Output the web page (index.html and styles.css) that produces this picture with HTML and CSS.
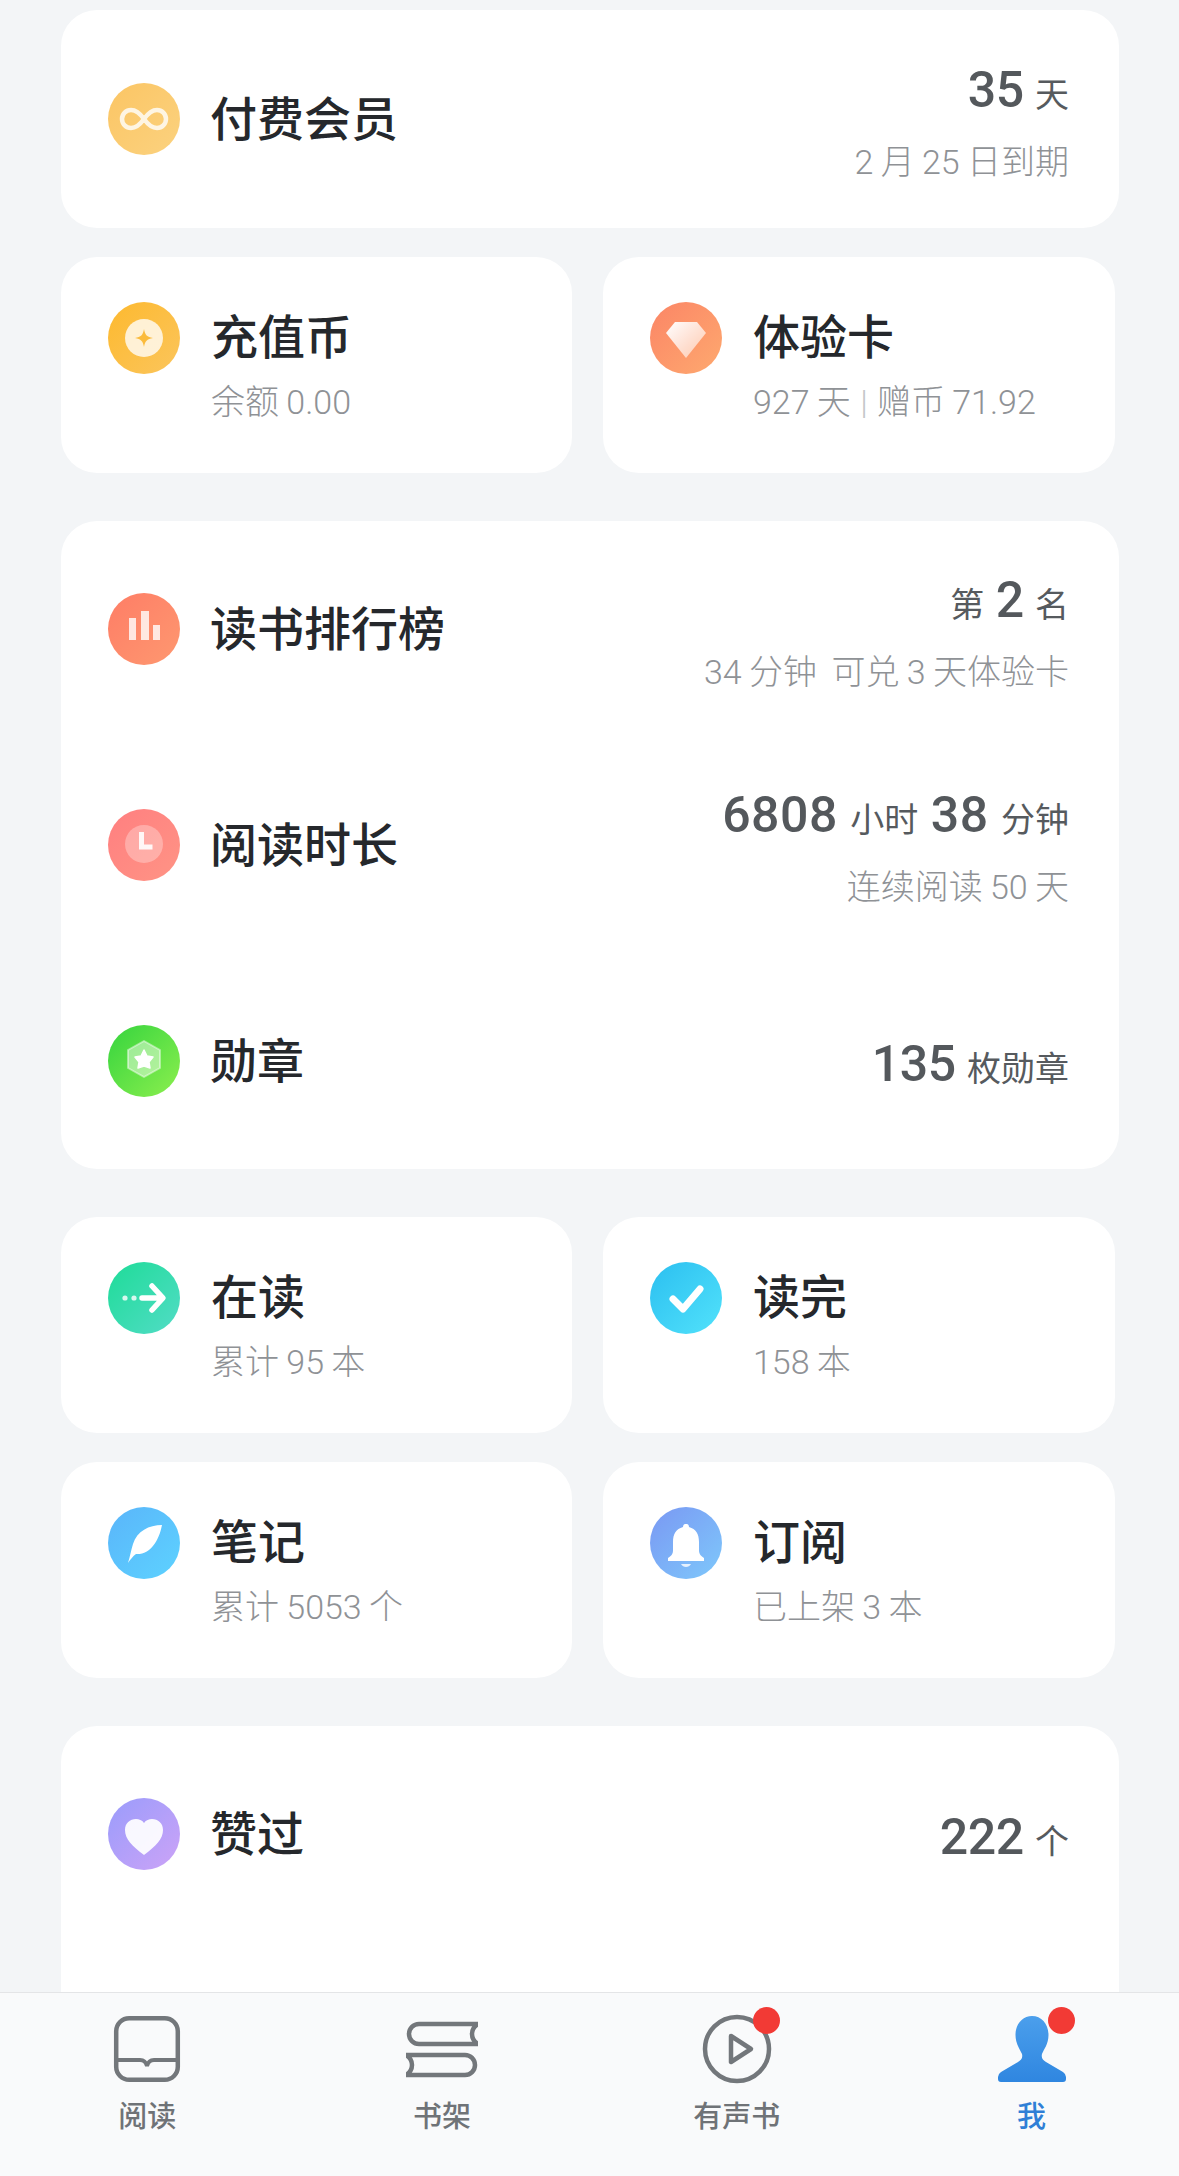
FILE: index.html
```html
<!DOCTYPE html>
<html lang="zh-CN">
<head>
    <meta charset="UTF-8">
    <meta name="viewport" content="width=device-width, initial-scale=1.0">
    <title>我</title>
    <link rel="stylesheet" href="styles.css">
</head>
<body>
    <main class="content">
        <!-- Membership -->
        <div class="stack">
            <section class="card">
                <div class="row">
                    <div class="icon icon-vip">
                        <svg viewBox="0 0 72 72"><path d="M36 36C31 29 27 27 23 27a9 9 0 0 0 0 18c4 0 8-2 13-9s9-9 13-9a9 9 0 0 1 0 18c-4 0-8-2-13-9z" fill="none" stroke="#fff" stroke-opacity=".8" stroke-width="4.500"/></svg>
                    </div>
                    <div class="title">付费会员</div>
                    <div class="stat">
                        <div class="stat-main"><span class="num">35</span> 天</div>
                        <div class="sub">2 月 25 日到期</div>
                    </div>
                </div>
            </section>

            <section class="pair">
                <div class="card tile">
                    <div class="icon icon-coin">
                        <svg viewBox="0 0 72 72"><circle cx="36" cy="36" r="19" fill="#fff" fill-opacity=".78"/><path d="M36 27c1 6 3 8 9 9-6 1-8 3-9 9-1-6-3-8-9-9 6-1 8-3 9-9z" fill="#fbbb3c"/></svg>
                    </div>
                    <div class="tile-text">
                        <div class="title">充值币</div>
                        <div class="sub">余额 0.00</div>
                    </div>
                </div>
                <div class="card tile">
                    <div class="icon icon-gem">
                        <svg viewBox="0 0 72 72"><defs><linearGradient id="gem" x1="0" y1="0" x2="1" y2="1"><stop offset="0" stop-color="#fff"/><stop offset="1" stop-color="#fff" stop-opacity=".45"/></linearGradient></defs><path d="M25 20h22l9 11-20 25-20-25z" fill="url(#gem)"/></svg>
                    </div>
                    <div class="tile-text">
                        <div class="title">体验卡</div>
                        <div class="sub">927 天 <span class="bar">|</span> 赠币 71.92</div>
                    </div>
                </div>
            </section>
        </div>

        <section class="card group">
            <div class="row">
                <div class="icon icon-rank">
                    <svg viewBox="0 0 72 72" fill="#fff" fill-opacity=".8"><rect x="21" y="25" width="7" height="22"/><rect x="33" y="18" width="8" height="29"/><rect x="45" y="32" width="7" height="15"/></svg>
                </div>
                <div class="title">读书排行榜</div>
                <div class="stat">
                    <div class="stat-main">第 <span class="num">2</span> 名</div>
                    <div class="sub">34 分钟&nbsp; 可兑 3 天体验卡</div>
                </div>
            </div>
            <div class="row">
                <div class="icon icon-time">
                    <svg viewBox="0 0 72 72"><circle cx="36" cy="35" r="19" fill="#fff" fill-opacity=".3"/><path d="M33.500 23v15h11" fill="none" stroke="#fff" stroke-opacity=".9" stroke-width="5"/></svg>
                </div>
                <div class="title">阅读时长</div>
                <div class="stat stat-up">
                    <div class="stat-main"><span class="num">6808</span> 小时 <span class="num">38</span> 分钟</div>
                    <div class="sub">连续阅读 50 天</div>
                </div>
            </div>
            <div class="row">
                <div class="icon icon-medal">
                    <svg viewBox="0 0 72 72"><path d="M36 16l16 9v18l-16 9-16-9V25z" fill="#fff" fill-opacity=".45" stroke="#fff" stroke-opacity=".45" stroke-width="2" stroke-linejoin="round"/><path d="M36 25l3 6 6 1-4 5 1 6-6-2-6 2 1-6-4-5 6-1z" fill="#fff" stroke="#fff" stroke-width="1.500" stroke-linejoin="round"/></svg>
                </div>
                <div class="title">勋章</div>
                <div class="stat stat-single">
                    <div class="stat-main"><span class="num">135</span> 枚勋章</div>
                </div>
            </div>
        </section>

        <section class="pair">
            <div class="card tile">
                <div class="icon icon-reading">
                    <svg viewBox="0 0 72 72"><circle cx="17" cy="36" r="2.600" fill="#fff" fill-opacity=".8"/><circle cx="26" cy="36" r="2.600" fill="#fff" fill-opacity=".8"/><path d="M34 36h20M44 24l11 12-11 12" fill="none" stroke="#fff" stroke-width="5.500" stroke-linecap="round" stroke-linejoin="round"/></svg>
                </div>
                <div class="tile-text">
                    <div class="title">在读</div>
                    <div class="sub">累计 95 本</div>
                </div>
            </div>
            <div class="card tile">
                <div class="icon icon-done">
                    <svg viewBox="0 0 72 72"><path d="M23 37l10 10 17-20" fill="none" stroke="#fff" stroke-width="7" stroke-linecap="round" stroke-linejoin="round"/></svg>
                </div>
                <div class="tile-text">
                    <div class="title">读完</div>
                    <div class="sub">158 本</div>
                </div>
            </div>
            <div class="card tile">
                <div class="icon icon-note">
                    <svg viewBox="0 0 72 72"><path d="M54 18c-13 0-25 6-29 19-2 6-3 13-5 19 2-3 5-7 8-9 14 1 23-13 26-29z" fill="#fff"/></svg>
                </div>
                <div class="tile-text">
                    <div class="title">笔记</div>
                    <div class="sub">累计 5053 个</div>
                </div>
            </div>
            <div class="card tile">
                <div class="icon icon-bell">
                    <svg viewBox="0 0 72 72" fill="#fff"><path d="M36 17c2 0 3 1 3 3 7 2 10 7 10 15v9c0 3 2 5 5 7v3H18v-3c3-2 5-4 5-7v-9c0-8 3-13 10-15 0-2 1-3 3-3z"/><path d="M31 57h10c-1 2-3 3-5 3s-4-1-5-3z" fill-opacity=".8"/></svg>
                </div>
                <div class="tile-text">
                    <div class="title">订阅</div>
                    <div class="sub">已上架 3 本</div>
                </div>
            </div>
        </section>

        <section class="card group last">
            <div class="row">
                <div class="icon icon-liked">
                    <svg viewBox="0 0 72 72"><path d="M36 57C24 48 17 41 17 32c0-7 5-11 11-11 3 0 6 1 8 4 2-3 5-4 8-4 6 0 11 4 11 11 0 9-7 16-19 25z" fill="#fff" fill-opacity=".92"/></svg>
                </div>
                <div class="title">赞过</div>
                <div class="stat stat-single">
                    <div class="stat-main"><span class="num">222</span> 个</div>
                </div>
            </div>
        </section>
    </main>

    <!-- Bottom tabs -->
    <nav class="tabbar">
        <div class="tab">
            <div class="tab-icon">
                <svg viewBox="0 0 72 72" fill="none" stroke="#73777b" stroke-width="4.500"><rect x="5.200" y="5.200" width="61.600" height="61.600" rx="13"/><path d="M5 47h24c4 0 6 2 7 6 1-4 3-6 7-6h24" stroke-width="4"/></svg>
            </div>
            <div class="tab-label">阅读</div>
        </div>
        <div class="tab">
            <div class="tab-icon">
                <svg viewBox="0 0 72 72" fill="none" stroke="#73777b" stroke-width="4.500"><path d="M72 11H13a10 10 0 0 0 0 20h59c-8-5-8-15 0-20z"/><path d="M0 42h59a10 10 0 0 1 0 20H0c8-5 8-15 0-20z"/></svg>
            </div>
            <div class="tab-label">书架</div>
        </div>
        <div class="tab">
            <div class="tab-icon">
                <svg viewBox="0 0 72 72" fill="none" stroke="#73777b" stroke-width="4.500" stroke-linejoin="round"><circle cx="36" cy="36" r="32"/><path d="M30 23l20 13-20 13z"/></svg>
                <span class="badge"></span>
            </div>
            <div class="tab-label">有声书</div>
        </div>
        <div class="tab tab-active">
            <div class="tab-icon">
                <svg viewBox="0 0 72 72"><defs><linearGradient id="me" x1="0" y1="0" x2="0" y2="1"><stop offset="0" stop-color="#4b9fec"/><stop offset="1" stop-color="#2f86e0"/></linearGradient></defs><path d="M36 3c9.500 0 16.500 8 16.500 19 0 9-5 15-6.500 19-1 4 1 6 4 8l17 10q3 2 3 5v2q0 3-3 3H5q-3 0-3-3v-2q0-3 3-5l17-10c3-2 5-4 4-8-1.500-4-6.500-10-6.500-19C19.500 11 26.500 3 36 3z" fill="url(#me)"/></svg>
                <span class="badge"></span>
            </div>
            <div class="tab-label">我</div>
        </div>
    </nav>
</body>
</html>
```

FILE: styles.css
```css
* {
    box-sizing: border-box;
}

html, body {
    height: 100%;
}

body {
    margin: 0;
    display: flex;
    flex-direction: column;
    overflow: hidden;
    background-color: #f3f5f7;
    font-family: Roboto, "Noto Sans CJK SC", sans-serif;
}

.content {
    flex: 1;
    min-height: 0;
    overflow: hidden;
    display: flex;
    flex-direction: column;
    gap: 48px;
    padding: 10px 60px 0 61px;
}

.stack {
    display: flex;
    flex-direction: column;
    gap: 29px;
}

.card {
    background-color: #fff;
    border-radius: 36px;
}

.row {
    display: flex;
    align-items: center;
    height: 218px;
    padding: 0 50px 0 47px;
}

.group .row {
    height: 216px;
}

.last {
    flex: none;
    height: 400px;
}

.pair {
    display: grid;
    grid-template-columns: 511px 512px;
    gap: 29px 31px;
}

.tile {
    display: flex;
    align-items: flex-start;
    height: 216px;
    padding: 45px 20px 0 47px;
}

.tile-text {
    margin-left: 31px;
}

.icon {
    flex: none;
    width: 72px;
    height: 72px;
    border-radius: 50%;
}

.icon svg {
    display: block;
    width: 72px;
    height: 72px;
}

.icon-vip { background: linear-gradient(135deg, #fbc564, #fbd27f); }
.icon-coin { background: linear-gradient(135deg, #fdb92f, #fbc55c); }
.icon-gem { background: linear-gradient(135deg, #fb8566, #fea96f); }
.icon-rank { background: linear-gradient(135deg, #fe7d66, #fe9870); }
.icon-time { background: linear-gradient(135deg, #ff7f80, #ff9485); }
.icon-medal { background: linear-gradient(135deg, #35d43e, #8cef4e); }
.icon-reading { background: linear-gradient(135deg, #1edc98, #52dcc6); }
.icon-done { background: linear-gradient(135deg, #2bbff0, #52e2fb); }
.icon-note { background: linear-gradient(135deg, #5ab5fa, #5dd2ff); }
.icon-bell { background: linear-gradient(135deg, #7a98f3, #7ec8fb); }
.icon-liked { background: linear-gradient(135deg, #9a9cfb, #cca3f7); }

.title {
    font-size: 47px;
    line-height: 72px;
    font-weight: 500;
    color: #25282c;
}

.row .title {
    margin-left: 30px;
    padding-top: 2px;
}

.sub {
    font-size: 34px;
    line-height: 46px;
    font-weight: 300;
    word-spacing: -1px;
    color: #8f9296;
}

.tile .sub {
    margin-top: 5px;
}

.bar {
    margin: 0 2px;
    color: #c4c6c9;
}

.stat {
    margin-left: auto;
    text-align: right;
    padding-top: 6px;
}

.stat-up {
    padding-top: 4px;
}

.stat-single {
    padding-top: 10px;
}

.stat-main {
    font-size: 34px;
    line-height: 60px;
    margin-bottom: 14px;
    color: #565a5e;
}

.stat-single .stat-main {
    margin-bottom: 0;
}

.num {
    margin: 0 3px;
    font-size: 50px;
    font-weight: 500;
    letter-spacing: -0.5px;
    color: #54585c;
}

.stat-up .num {
    margin: 0 4px;
    letter-spacing: 0.5px;
}

.tabbar {
    flex: none;
    display: grid;
    grid-template-columns: repeat(4, 1fr);
    height: 184px;
    padding-top: 20px;
    background-color: #f9fafb;
    border-top: 1px solid #e4e5e7;
}

.tab {
    display: flex;
    flex-direction: column;
    align-items: center;
}

.tab-icon {
    position: relative;
    width: 72px;
    height: 72px;
}

.tab-icon svg {
    display: block;
    width: 72px;
    height: 72px;
}

.tab-label {
    margin-top: 11px;
    font-size: 29px;
    line-height: 42px;
    font-weight: 500;
    color: #6f7377;
}

.tab-active .tab-label {
    color: #2f7fd6;
}

.badge {
    position: absolute;
    top: -6px;
    right: -7px;
    width: 27px;
    height: 27px;
    border-radius: 50%;
    background-color: #f23a35;
}
```
